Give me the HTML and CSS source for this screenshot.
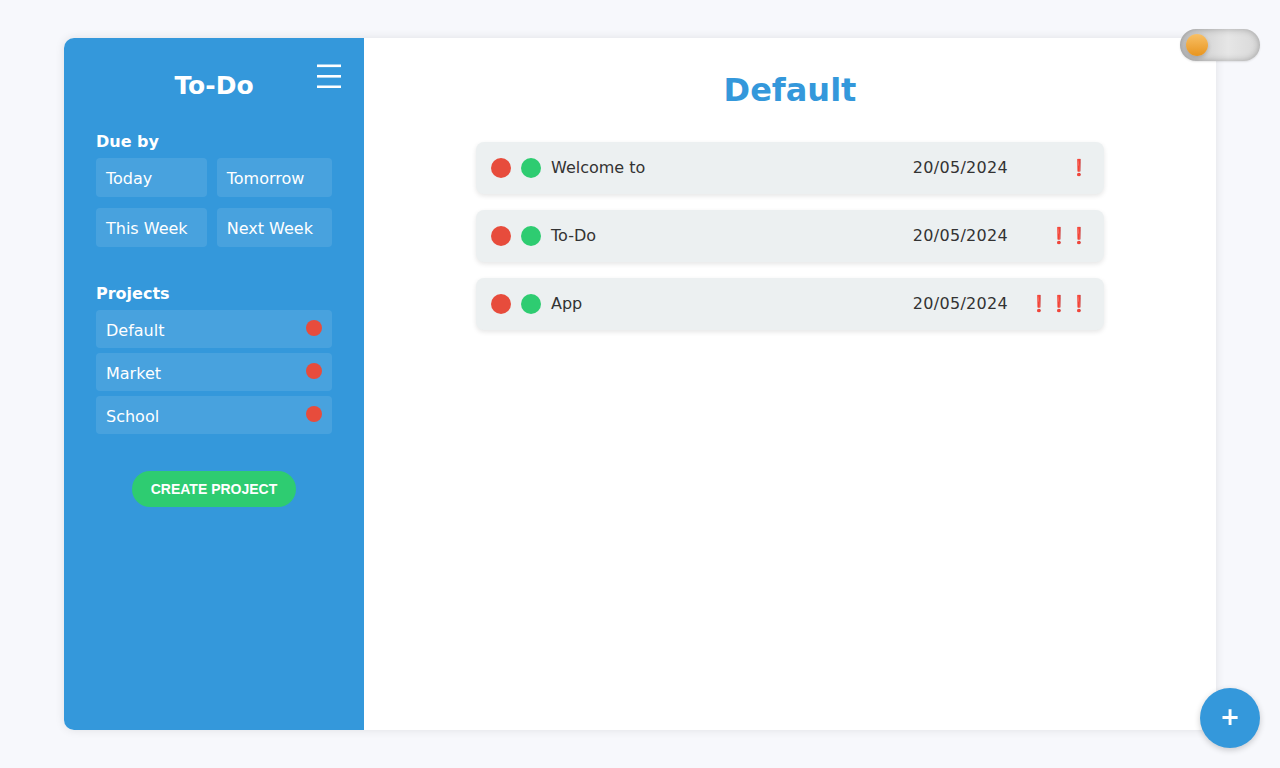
FILE: index.html
```html
<!DOCTYPE html>
<html lang="en">
<head>
<meta charset="utf-8">
<title>To-Do</title>
<link rel="stylesheet" href="styles.css">
</head>
<body>
<div class="app">
  <aside class="sidebar">
    <div class="brand">
      <h1 class="brand-title">To-Do</h1>
      <svg class="menu-icon" width="24" height="24" viewBox="0 0 24 24">
        <rect x="0" y="0.5" width="24" height="2.6" fill="#fff"/>
        <rect x="0" y="11" width="24" height="2.6" fill="#fff"/>
        <rect x="0" y="21.5" width="24" height="2.6" fill="#fff"/>
      </svg>
    </div>
    <section class="section">
      <h3 class="section-title">Due by</h3>
      <div class="due-grid">
        <button class="side-btn">Today</button>
        <button class="side-btn">Tomorrow</button>
        <button class="side-btn">This Week</button>
        <button class="side-btn">Next Week</button>
      </div>
    </section>
    <section class="section projects">
      <h3 class="section-title">Projects</h3>
      <ul class="project-list">
        <li class="project"><span>Default</span><span class="project-dot"></span></li>
        <li class="project"><span>Market</span><span class="project-dot"></span></li>
        <li class="project"><span>School</span><span class="project-dot"></span></li>
      </ul>
    </section>
    <div class="create-wrap">
      <button class="create-btn">CREATE PROJECT</button>
    </div>
  </aside>
  <main class="main">
    <h2 class="main-title">Default</h2>
    <div class="tasks">
      <div class="task">
        <span class="dot red"></span><span class="dot green"></span>
        <span class="task-name">Welcome to</span>
        <span class="task-date">20/05/2024</span>
        <span class="prio"><span class="bang">❗</span></span>
      </div>
      <div class="task">
        <span class="dot red"></span><span class="dot green"></span>
        <span class="task-name">To-Do</span>
        <span class="task-date">20/05/2024</span>
        <span class="prio"><span class="bang">❗</span><span class="bang">❗</span></span>
      </div>
      <div class="task">
        <span class="dot red"></span><span class="dot green"></span>
        <span class="task-name">App</span>
        <span class="task-date">20/05/2024</span>
        <span class="prio"><span class="bang">❗</span><span class="bang">❗</span><span class="bang">❗</span></span>
      </div>
    </div>
  </main>
</div>
<div class="toggle"><span class="knob"></span></div>
<button class="fab">+</button>
</body>
</html>
```

FILE: styles.css
```css
* { box-sizing: border-box; }
html, body { margin: 0; padding: 0; }
body {
  background: #f7f8fc;
  font-family: "DejaVu Sans", sans-serif;
  font-size: 16px;
  height: 100vh;
  display: flex;
  align-items: center;
  justify-content: center;
}
.app {
  width: 90vw;
  height: 90vh;
  display: flex;
  border-radius: 10px;
  overflow: hidden;
  background: #fff;
  box-shadow: 0 0 10px rgba(0, 0, 0, 0.1);
}
.sidebar {
  width: 300px;
  flex: none;
  background: #3498db;
  color: #fff;
  padding: 33px 32px 0;
  position: relative;
}
.brand { text-align: center; }
.brand-title {
  margin: 0;
  padding-top: 1px;
  font-size: 25px;
  line-height: 28px;
  font-weight: 700;
}
.menu-icon {
  position: absolute;
  top: 26px;
  right: 23px;
}
.section { margin-top: 31px; }
.projects { margin-top: 36.5px; }
.section-title {
  margin: 0 0 6px;
  padding-top: 2px;
  font-size: 16px;
  line-height: 18.6px;
  font-weight: 700;
}
.due-grid {
  display: grid;
  grid-template-columns: auto auto;
  column-gap: 10px;
  row-gap: 11.4px;
}
.side-btn {
  font-family: "DejaVu Sans", sans-serif;
  font-size: 16px;
  line-height: 18.6px;
  color: #fff;
  background: rgba(255, 255, 255, 0.1);
  border: none;
  border-radius: 4px;
  padding: 12px 10px 8px;
  text-align: left;
}
.project-list {
  list-style: none;
  margin: 0;
  padding: 0;
  display: flex;
  flex-direction: column;
  gap: 4.4px;
}
.project {
  display: flex;
  justify-content: space-between;
  align-items: flex-start;
  background: rgba(255, 255, 255, 0.1);
  border-radius: 4px;
  padding: 12px 10px 8px;
  line-height: 18.6px;
}
.project-dot {
  width: 16px;
  height: 16px;
  border-radius: 50%;
  margin-top: -2px;
  background: #e74c3c;
}
.create-wrap {
  display: flex;
  justify-content: center;
  margin-top: 36.4px;
}
.create-btn {
  font-family: "Liberation Sans", Arial, sans-serif;
  font-weight: 700;
  font-size: 14px;
  line-height: 18px;
  color: #fff;
  background: #2ecc71;
  border: none;
  border-radius: 18px;
  padding: 9px 19px;
}
.main {
  flex: 1;
  padding: 34px 0 0;
  display: flex;
  flex-direction: column;
  align-items: center;
}
.main-title {
  margin: 0;
  font-size: 32px;
  line-height: 37px;
  font-weight: 700;
  color: #3498db;
}
.tasks {
  margin-top: 33px;
  width: 628px;
  display: flex;
  flex-direction: column;
  gap: 16px;
}
.task {
  display: flex;
  align-items: center;
  background: #ecf0f1;
  border-radius: 8px;
  padding: 16px 15px;
  box-shadow: 0 2px 5px rgba(0, 0, 0, 0.1);
  color: #333;
  line-height: 20px;
}
.dot {
  width: 20px;
  height: 20px;
  border-radius: 50%;
  flex: none;
  margin-right: 10px;
}
.red { background: #e74c3c; }
.green { background: #2ecc71; }
.task-name { flex: 1; }
.task-date { margin-right: 21px; letter-spacing: 0.3px; }
.prio {
  width: 60px;
  display: flex;
  justify-content: flex-end;
}
.bang {
  width: 20px;
  text-align: center;
  color: #e0161e;
  font-family: "Noto Color Emoji", "DejaVu Sans", sans-serif;
  font-size: 16px;
}
.toggle {
  position: fixed;
  top: 29px;
  right: 20px;
  width: 80px;
  height: 32px;
  border-radius: 16px;
  background: linear-gradient(90deg, #c4c4c4, #e6e6e6 60%, #d8d8d8);
  box-shadow: inset 0 0 7px rgba(0, 0, 0, 0.28), 0 1px 2px rgba(0, 0, 0, 0.1);
  display: flex;
  align-items: center;
  padding-left: 6px;
}
.knob {
  width: 22px;
  height: 22px;
  border-radius: 50%;
  background: linear-gradient(180deg, #f8c066, #e8951f);
  box-shadow: 0 2px 4px rgba(0, 0, 0, 0.2);
}
.fab {
  position: fixed;
  right: 20px;
  bottom: 20px;
  width: 60px;
  height: 60px;
  border-radius: 50%;
  border: none;
  background: #3498db;
  color: #fff;
  font-family: "DejaVu Sans", sans-serif;
  font-weight: 700;
  font-size: 24px;
  line-height: 1;
  padding: 0 0 3px;
  box-shadow: 0 2px 6px rgba(0, 0, 0, 0.2);
}
```
